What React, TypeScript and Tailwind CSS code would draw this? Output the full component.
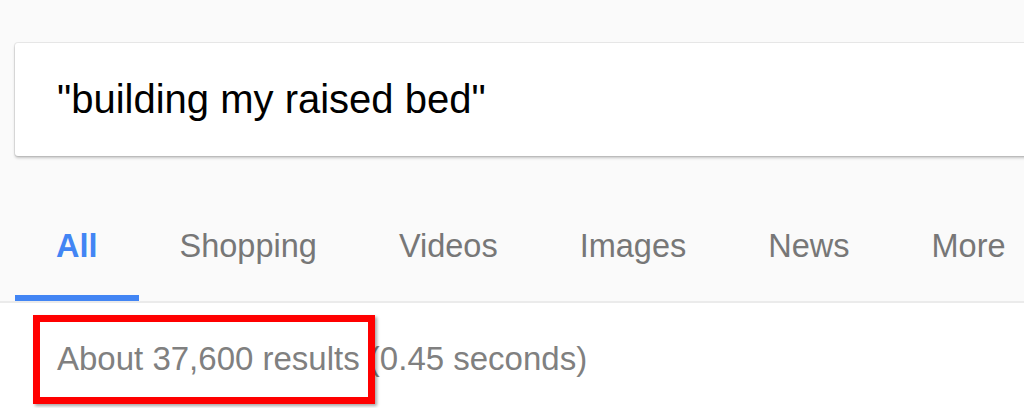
import React from 'react';

const tabs = ['All', 'Shopping', 'Videos', 'Images', 'News', 'More'];

export default function App() {
  return (
    <div className="w-[1024px] h-[408px] overflow-hidden bg-white font-['Liberation_Sans',Arial,sans-serif]">
      {/* Search header */}
      <div className="bg-[#fafafa] pt-[43px] border-b-2 border-[#ebebeb]">
        <div className="ml-[15px] h-[113px] w-[1040px] flex items-center pl-[42px] pb-[2px] bg-white rounded-[3px] shadow-[0_2px_3px_rgba(0,0,0,0.22),0_0_0_1px_rgba(0,0,0,0.07)]">
          <span className="text-[40px] leading-[46px] text-black">"building my raised bed"</span>
        </div>

        {/* Tabs */}
        <div className="flex pl-[15px] mt-[72px]">
          {tabs.map((t, i) => (
            <div
              key={t}
              className={
                i === 0
                  ? 'px-[41px] pb-[30px] border-b-[6px] border-[#4285f4] text-[32.5px] leading-[37px] font-bold text-[#4285f4]'
                  : 'px-[41px] pb-[30px] border-b-[6px] border-transparent text-[32.5px] leading-[37px] text-[#777777]'
              }
            >
              {t}
            </div>
          ))}
        </div>
      </div>

      {/* Result stats */}
      <div className="relative pl-[57px] pt-[37px]">
        <p className="text-[33px] leading-[38px] text-[#808080]">About 37,600 results (0.45 seconds)</p>
        <div className="absolute left-[33px] top-[12px] w-[342px] h-[89px] border-[7px] border-[#ff0000] shadow-[2px_2px_3px_rgba(0,0,0,0.35)]" />
      </div>
    </div>
  );
}
